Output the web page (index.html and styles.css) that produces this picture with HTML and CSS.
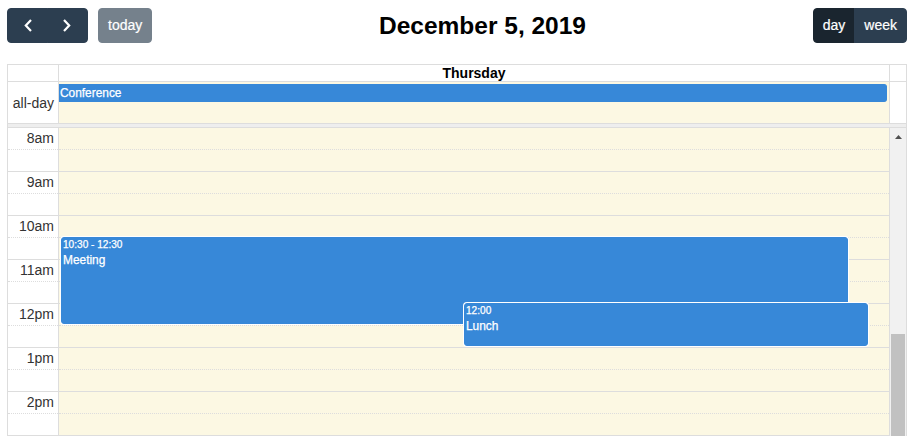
FILE: index.html
```html
<!DOCTYPE html>
<html lang="en">
<head>
<meta charset="utf-8">
<title>Calendar</title>
<link rel="stylesheet" href="styles.css">
</head>
<body>
<div class="cal">
  <div class="toolbar">
    <div class="tb-left">
      <div class="btn-group">
        <button class="btn btn-icon" aria-label="prev">
          <svg viewBox="0 0 21 21"><path d="M14 5 L8.8 10.5 L14 16" fill="none" stroke="#fff" stroke-width="2.2"/></svg>
        </button>
        <button class="btn btn-icon" aria-label="next">
          <svg viewBox="0 0 21 21"><path d="M7 5 L12.2 10.5 L7 16" fill="none" stroke="#fff" stroke-width="2.2"/></svg>
        </button>
      </div>
      <button class="btn btn-today" disabled>today</button>
    </div>
    <h2 class="title">December 5, 2019</h2>
    <div class="btn-group">
      <button class="btn active">day</button>
      <button class="btn">week</button>
    </div>
  </div>

  <div class="view">
    <div class="head-row">
      <div class="axis"></div>
      <div class="day-head">Thursday</div>
      <div class="gutter"></div>
    </div>
    <div class="allday-row">
      <div class="axis axis-label">all-day</div>
      <div class="allday-cell">
        <div class="ev ev-allday">Conference</div>
      </div>
      <div class="gutter"></div>
    </div>
    <div class="divider"></div>
    <div class="tgrid">
      <div class="tg-axis">
        <div class="cell major">8am</div>
        <div class="cell minor"></div>
        <div class="cell major">9am</div>
        <div class="cell minor"></div>
        <div class="cell major">10am</div>
        <div class="cell minor"></div>
        <div class="cell major">11am</div>
        <div class="cell minor"></div>
        <div class="cell major">12pm</div>
        <div class="cell minor"></div>
        <div class="cell major">1pm</div>
        <div class="cell minor"></div>
        <div class="cell major">2pm</div>
        <div class="cell minor"></div>
        <div class="cell major"></div>
      </div>
      <div class="tg-day">
        <div class="cell major"></div>
        <div class="cell minor"></div>
        <div class="cell major"></div>
        <div class="cell minor"></div>
        <div class="cell major"></div>
        <div class="cell minor"></div>
        <div class="cell major"></div>
        <div class="cell minor"></div>
        <div class="cell major"></div>
        <div class="cell minor"></div>
        <div class="cell major"></div>
        <div class="cell minor"></div>
        <div class="cell major"></div>
        <div class="cell minor"></div>
        <div class="cell major"></div>

        <div class="ev tev ev-meeting">
          <div class="t">10:30 - 12:30</div>
          <div class="n">Meeting</div>
        </div>
        <div class="ev tev ev-lunch">
          <div class="t">12:00</div>
          <div class="n">Lunch</div>
        </div>
      </div>
      <div class="tg-scroll">
        <div class="sb-arrow"><svg viewBox="0 0 7 4" width="7" height="4"><polygon points="0,4 3.5,0 7,4" fill="#505050"/></svg></div>
        <div class="sb-thumb"></div>
      </div>
    </div>
  </div>
</div>
</body>
</html>
```

FILE: styles.css
```css
html, body {
  margin: 0;
  padding: 0;
  overflow: hidden;
  background: #fff;
}

body {
  font-family: "Liberation Sans", Arial, Helvetica, sans-serif;
  font-size: 14px;
  color: #333;
}

.cal {
  width: 900px;
  margin: 8px 0 0 7px;
}

/* toolbar */
.toolbar {
  display: flex;
  justify-content: space-between;
  align-items: center;
  height: 35px;
  margin-bottom: 21px;
}

.tb-left {
  display: flex;
  align-items: center;
  gap: 10px;
}

.btn-group {
  display: flex;
}

.btn {
  font-family: inherit;
  font-size: 14px;
  line-height: 21px;
  margin: 0;
  padding: 6px 9px;
  border: 1px solid #2c3e50;
  background: #2c3e50;
  color: #fff;
  border-radius: 4px;
  display: inline-flex;
  align-items: center;
  justify-content: center;
  -webkit-text-stroke: 0.2px #fff;
}

.btn-icon svg {
  width: 21px;
  height: 21px;
  display: block;
}

.btn-group .btn:not(:first-child) {
  margin-left: -1px;
  border-top-left-radius: 0;
  border-bottom-left-radius: 0;
}

.btn-group .btn:not(:last-child) {
  border-top-right-radius: 0;
  border-bottom-right-radius: 0;
}

.btn-today {
  opacity: 0.65;
}

.btn.active {
  background: #1a252f;
  border-color: #1a252f;
}

.title {
  margin: 0;
  font-size: 24.5px;
  font-weight: bold;
  color: #000;
}

/* view */
.view {
  border: 1px solid #ddd;
  border-bottom: 0;
}

.head-row {
  display: flex;
  border-bottom: 1px solid #ddd;
}

.axis {
  width: 50px;
  border-right: 1px solid #ddd;
  flex: none;
}

.day-head {
  flex: 1;
  text-align: center;
  font-weight: bold;
  line-height: 16px;
  color: #000;
  border-right: 1px solid #ddd;
}

.gutter {
  width: 16px;
  flex: none;
}

.allday-row {
  display: flex;
  height: 41px;
  border-bottom: 1px solid #ddd;
}

.axis-label {
  box-sizing: border-box;
  display: flex;
  align-items: center;
  justify-content: flex-end;
  padding: 0 4px;
  width: 51px;
}

.allday-cell {
  flex: 1;
  background: #fcf8e3;
  border-right: 1px solid #ddd;
}

.divider {
  height: 3px;
  background: #eee;
  border-bottom: 1px solid #ddd;
}

/* time grid */
.tgrid {
  display: flex;
  height: 309px;
  overflow: hidden;
}

.tg-axis {
  width: 50px;
  flex: none;
  border-right: 1px solid #ddd;
}

.tg-axis .cell {
  text-align: right;
  padding-right: 4px;
  line-height: 21px;
}

.tg-day {
  flex: 1;
  position: relative;
  background: #fcf8e3;
  border-right: 1px solid #ddd;
}

.cell {
  height: 21px;
}

.cell + .cell {
  border-top: 1px solid #ddd;
}

.cell.minor {
  border-top-style: dotted;
}

.tg-scroll {
  width: 16px;
  flex: none;
  background: #f1f1f1;
  display: flex;
  flex-direction: column;
  align-items: center;
}

.sb-arrow {
  height: 17px;
  width: 16px;
  flex: none;
  display: flex;
  align-items: center;
  justify-content: center;
}

.sb-arrow svg {
  display: block;
}

.sb-thumb {
  margin-top: 189px;
  width: 14px;
  height: 120px;
  flex: none;
  background: #c1c1c1;
}

/* events */
.ev {
  background: #3788d8;
  border: 1px solid #3788d8;
  color: #fff;
  font-size: 11.9px;
  line-height: 1.4;
  border-radius: 3px;
  -webkit-text-stroke: 0.25px #fff;
}

.ev-allday {
  margin: 2px 2px 0 0;
  padding: 0 1px;
  line-height: 16px;
  border-left-width: 0;
  border-radius: 0 3px 3px 0;
  white-space: nowrap;
}

.tev {
  position: absolute;
  box-sizing: border-box;
  box-shadow: 0 0 0 1px #fff;
  overflow: hidden;
}

.tev .t {
  font-size: 10.1px;
  padding: 0 1px;
  white-space: nowrap;
}

.tev .n {
  padding: 0 1px;
}

.ev-meeting {
  left: 2px;
  top: 109px;
  width: 787px;
  height: 87px;
}

.ev-lunch {
  left: 405px;
  top: 175px;
  width: 404px;
  height: 43px;
}
```
